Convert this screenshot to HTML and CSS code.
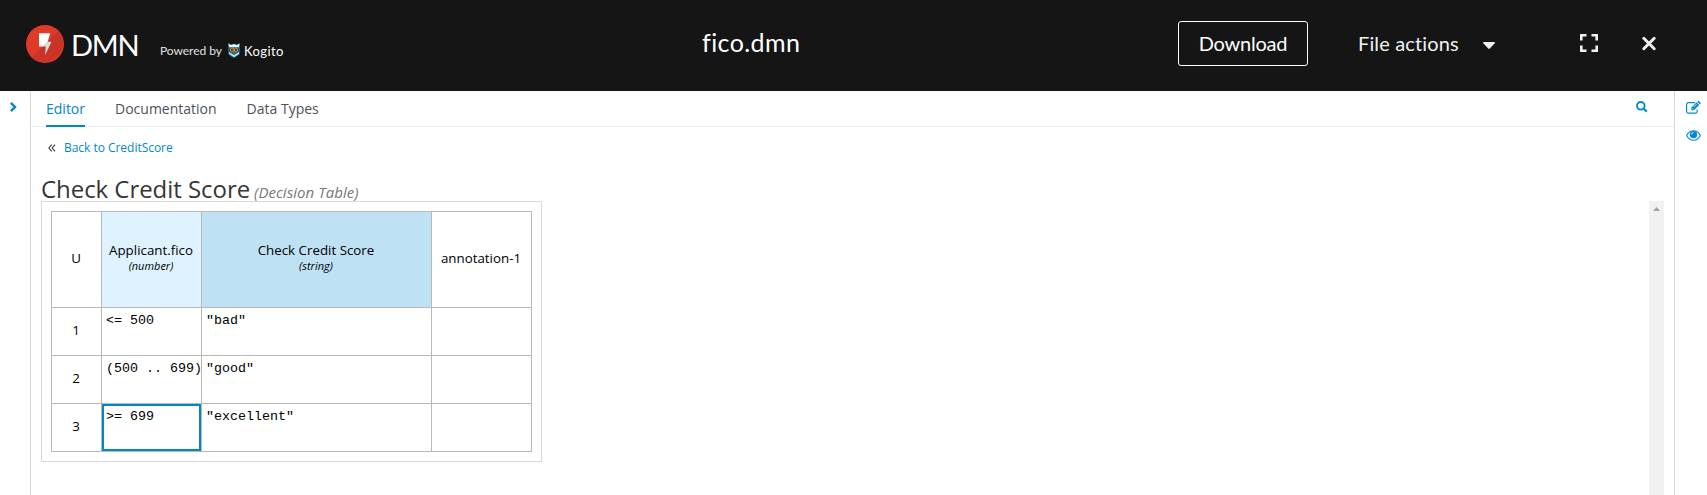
FILE: index.html
```html
<!DOCTYPE html>
<html lang="en">
<head>
<meta charset="utf-8">
<title>fico.dmn</title>
<link rel="stylesheet" href="styles.css">
</head>
<body>
<div class="page">
  <header class="masthead">
    <div class="brand">
      <svg class="brand-mark" width="38" height="38" viewBox="0 0 38 38">
        <circle cx="19" cy="19" r="19" fill="#df3b28"/>
        <path d="M5.6 32.4A19 19 0 0 0 32.4 5.6z" fill="#ca3428"/>
        <path d="M13 8.200h11.200L21.800 16.500 17.200 21.500H13z" fill="#fff"/>
        <path d="M17 21.500l4.600-4.700h3.900L19 30.300l.8-8.800z" fill="#ddd"/>
      </svg>
      <span class="brand-name">DMN</span>
      <span class="powered">Powered by</span>
      <svg class="owl" width="12" height="15" viewBox="0 0 12 15">
        <path d="M0 0l3 1.500h6L12 0v11l-3 2.500L6 15l-3-1.500L0 11z" fill="#155f78"/>
        <path d="M.5.5L3 2l3-1 3 1L11.500.5 11 4.300H1z" fill="#e9f4f7"/>
        <path d="M1 9l2.500 1.500L6 12l2.500-1.500L11 9v2L6 14.200 1 11z" fill="#bfe3ee"/>
        <circle cx="4" cy="6.800" r="1.700" fill="#47392f" stroke="#e28a35"/>
        <circle cx="8" cy="6.800" r="1.700" fill="#47392f" stroke="#e28a35"/>
        <path d="M5 9h2l-1 1.600z" fill="#e28a35"/>
      </svg>
      <span class="kogito">Kogito</span>
    </div>
    <h1 class="file-name">fico.dmn</h1>
    <div class="actions">
      <button class="download"><span>Download</span></button>
      <button class="file-actions"><span>File actions</span>
        <svg width="12" height="7" viewBox="0 0 12 7"><path d="M.8 0h10.400q1.200.3.500 1.200L6.800 6.600q-.8.700-1.600 0L.3 1.200Q-.4.300.8 0z" fill="#f0f0f0"/></svg>
      </button>
      <svg class="expand" width="18" height="18" viewBox="0 0 18 18" fill="none" stroke="#f0f0f0" stroke-width="2.600"><path d="M1.300 6.500V1.300h5.200M11.500 1.300h5.200v5.200M16.700 11.500v5.200h-5.200M6.500 16.700H1.300v-5.200"/></svg>
      <svg class="close" width="14" height="15" viewBox="0 0 14 15" stroke="#f0f0f0" stroke-width="2.900" stroke-linecap="round"><path d="M1.800 2.200l10.400 10.600M12.200 2.200L1.800 12.800"/></svg>
    </div>
  </header>
  <div class="workspace">
    <aside class="rail-left">
      <svg width="8" height="10" viewBox="0 0 8 10" fill="none" stroke="#0088ce" stroke-width="2.400"><path d="M.9.9L5 5 .9 9.100"/></svg>
    </aside>
    <main class="editor">
      <nav class="tabs">
        <a class="tab tab-active">Editor</a>
        <a class="tab tab-docs">Documentation</a>
        <a class="tab">Data Types</a>
        <svg class="search" width="12" height="12" viewBox="0 0 12 12" fill="none" stroke="#0088ce"><circle cx="4.800" cy="4.800" r="3.800" stroke-width="1.900"/><path d="M7.600 7.600l3.200 3.200" stroke-width="2.100"/></svg>
      </nav>
      <div class="back"><svg class="chevrons" width="8" height="8" viewBox="0 0 8 8" fill="none" stroke="#363636" stroke-width="1.100"><path d="M3.700.6L.9 4l2.800 3.400M7 .6L4.200 4 7 7.400"/></svg><a>Back to CreditScore</a></div>
      <div class="heading"><h2>Check Credit Score</h2><em>(Decision Table)</em></div>
      <div class="canvas">
        <div class="panel">
          <div class="table">
            <div class="cell header">U</div>
            <div class="cell header input"><span>Applicant.fico</span><i>(number)</i></div>
            <div class="cell header output"><span>Check Credit Score</span><i>(string)</i></div>
            <div class="cell header">annotation-1</div>
            <div class="cell">1</div><div class="cell expr">&lt;= 500</div><div class="cell expr">"bad"</div><div class="cell"></div>
            <div class="cell">2</div><div class="cell expr">(500 .. 699)</div><div class="cell expr">"good"</div><div class="cell"></div>
            <div class="cell">3</div><div class="cell expr selected">&gt;= 699</div><div class="cell expr">"excellent"</div><div class="cell"></div>
          </div>
        </div>
        <div class="scrollbar"><svg width="7" height="4" viewBox="0 0 7 4"><path d="M3.500 0L7 4H0z" fill="#a0a0a0"/></svg></div>
      </div>
    </main>
    <aside class="rail-right">
      <svg width="15" height="13" viewBox="0 0 15 13" fill="none" stroke="#0088ce"><path d="M9 1.600H2.400Q.6 1.600.6 3.400v7Q.6 12.200 2.400 12.200h7Q11.200 12.200 11.200 10.400V8.500" stroke-width="1.200"/><path d="M5.300 9.200V6.600L10.600 1.300l2.600 2.600-5.300 5.300zM11.300.7l.7-.7q.5-.3 1 .1l1.500 1.500q.4.500 0 1l-.7.700z" fill="#0088ce" stroke="none"/><path d="M6.400 7.200l1 1M7.500 6.100l3-3" stroke="#fff" stroke-width=".8"/></svg>
      <svg width="15" height="11" viewBox="0 0 15 11" fill="none" stroke="#0088ce"><path d="M.6 5.500Q3.200.8 7.500.8t6.900 4.700Q11.800 10.200 7.500 10.200T.6 5.500z" stroke-width="1.100"/><circle cx="7.500" cy="4.600" r="3.700" fill="#0088ce" stroke="none"/><path d="M5.500 4.600q0-2 2-2" stroke="#fff" stroke-width=".8"/></svg>
    </aside>
  </div>
</div>
</body>
</html>
```
FILE: styles.css
```css
* { box-sizing: border-box; }
body { margin: 0; background: #fff; font-family: "Open Sans", "Noto Sans", sans-serif; }
svg { display: block; flex: none; }
h1, h2 { margin: 0; font-weight: 400; }
.page { display: flex; flex-direction: column; width: 100%; height: 495px; overflow: hidden; }

.masthead { display: grid; grid-template-columns: 702px 476px 1fr; height: 91px; flex: none; background: #151515; color: #fff; font-family: Lato, sans-serif; white-space: nowrap; }
.brand { display: flex; align-items: flex-start; padding: 25px 0 0 26px; }
.brand-name { flex: none; width: 96px; padding-left: 7px; font-size: 29px; line-height: 40px; letter-spacing: -1.2px; }
.powered { flex: none; width: 68px; padding-top: 18px; font-size: 12px; line-height: 16px; letter-spacing: -.05px; color: #e0e0e0; }
.owl { margin: 18px 4px 0 0; }
.kogito { padding-top: 18px; font-size: 13px; line-height: 16px; letter-spacing: .4px; }
.file-name { padding-top: 26px; font-size: 25px; line-height: 32px; letter-spacing: .4px; }
.actions { display: flex; align-items: flex-start; }
.actions button { background: none; padding: 0; margin: 0; color: #fff; font: 20px/44px Lato, sans-serif; font-weight: 400; }
.actions .download { width: 130px; height: 45px; margin-top: 21px; border: 1px solid #fff; border-radius: 3px; line-height: 43px; letter-spacing: -.2px; }
.actions .file-actions { display: flex; align-items: center; justify-content: space-between; width: 137px; height: 44px; margin: 21px 85px 0 50px; border: 0; color: #f0f0f0; letter-spacing: .15px; }
.file-actions svg { margin-top: 4px; }
.expand { margin-top: 34px; }
.close { margin: 36px 0 0 44px; }

.workspace { display: flex; flex: 1; min-height: 0; }
.rail-left { width: 31px; border-right: 1px solid #d9d9d9; padding: 11px 0 0 10px; }
.rail-right { display: flex; flex-direction: column; gap: 16px; width: 33px; border-left: 1px solid #d9d9d9; padding: 10px 0 0 11px; }
.editor { display: flex; flex-direction: column; flex: 1; min-width: 0; }
.tabs { display: flex; height: 36px; flex: none; padding-left: 15px; border-bottom: 1px solid #ededed; }
.tab { height: 36px; margin-right: 30px; font-size: 14px; line-height: 36px; color: #4d5258; }
.tab-active { color: #0088ce; border-bottom: 2px solid #0088ce; }
.search { margin: 10px 26px 0 auto; }
.back { display: flex; align-items: center; height: 41px; flex: none; padding-left: 17px; font-size: 12px; letter-spacing: -.03px; color: #0088ce; }
.chevrons { margin-right: 8px; }
.heading { display: flex; align-items: baseline; gap: 4px; height: 33px; flex: none; padding: 4px 0 0 10px; line-height: 33px; color: #363636; white-space: nowrap; }
.heading h2 { font-size: 24px; letter-spacing: -.05px; }
.heading em { font-size: 15px; letter-spacing: .05px; color: #777; }
.canvas { display: flex; justify-content: space-between; align-items: flex-start; flex: 1; min-height: 0; padding: 0 10px; }
.panel { padding: 9px; border: 1px solid #d9d9d9; }
.table { display: grid; grid-template-columns: 49px 99px 229px 99px; grid-template-rows: 95px repeat(3, 47px); gap: 1px; padding: 1px; background: #b8b8b8; }
.cell { display: flex; flex-direction: column; align-items: center; justify-content: center; padding: 0 1px 3px 0; background: #fff; font-size: 13.333px; line-height: 18px; color: #000; white-space: nowrap; }
.header { padding-bottom: 4px; }
.cell i { font-size: 11px; line-height: 14px; }
.input { padding-bottom: 6px; background: #def3ff; }
.output { padding-bottom: 6px; background: #bee1f4; }
.expr { align-items: flex-start; justify-content: flex-start; padding: 4px 0 0 4px; font-family: "Liberation Mono", monospace; line-height: 17px; }
.selected { outline: 2px solid #0088ce; outline-offset: -2px; }
.scrollbar { width: 15px; height: 100%; padding: 6px 0 0 4px; background: #f1f1f1; }
```
